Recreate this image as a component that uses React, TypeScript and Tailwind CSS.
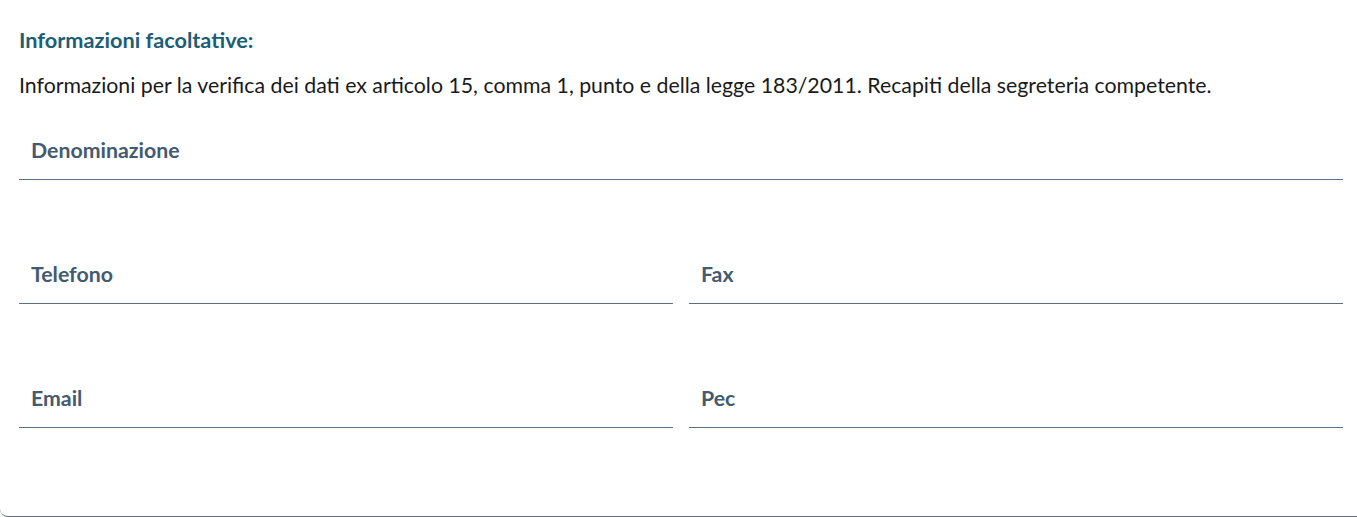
export default function App() {
  const font = { fontFamily: 'Lato, "Noto Sans", sans-serif' };
  const Field = ({ label }: { label: string }) => (
    <div className="border-b border-[#5c6f82] h-[56px] flex items-center px-[12px] pb-[4px]">
      <span className="text-[21.3px] font-bold text-[#435a70] leading-[28px]">{label}</span>
    </div>
  );
  return (
    <div className="w-full h-[517px] bg-white overflow-hidden" style={font}>
      <div className="h-[517px] border-b border-[#5c6f82] rounded-bl-[8px] pl-[19px] pr-[14px] pt-[26px]">
        <h3 className="text-[21.7px] font-bold text-[#1b5e76] leading-[28px]">Informazioni facoltative:</h3>
        <p className="text-[21.3px] text-[#1a1a1a] leading-[28px] mt-[17px]">
          Informazioni per la verifica dei dati ex articolo 15, comma 1, punto e della legge 183/2011. Recapiti della segreteria competente.
        </p>
        <div className="mt-[25px] flex flex-col gap-[68px]">
          <Field label="Denominazione" />
          <div className="grid grid-cols-2 gap-x-[16px]">
            <Field label="Telefono" />
            <Field label="Fax" />
          </div>
          <div className="grid grid-cols-2 gap-x-[16px]">
            <Field label="Email" />
            <Field label="Pec" />
          </div>
        </div>
      </div>
    </div>
  );
}
